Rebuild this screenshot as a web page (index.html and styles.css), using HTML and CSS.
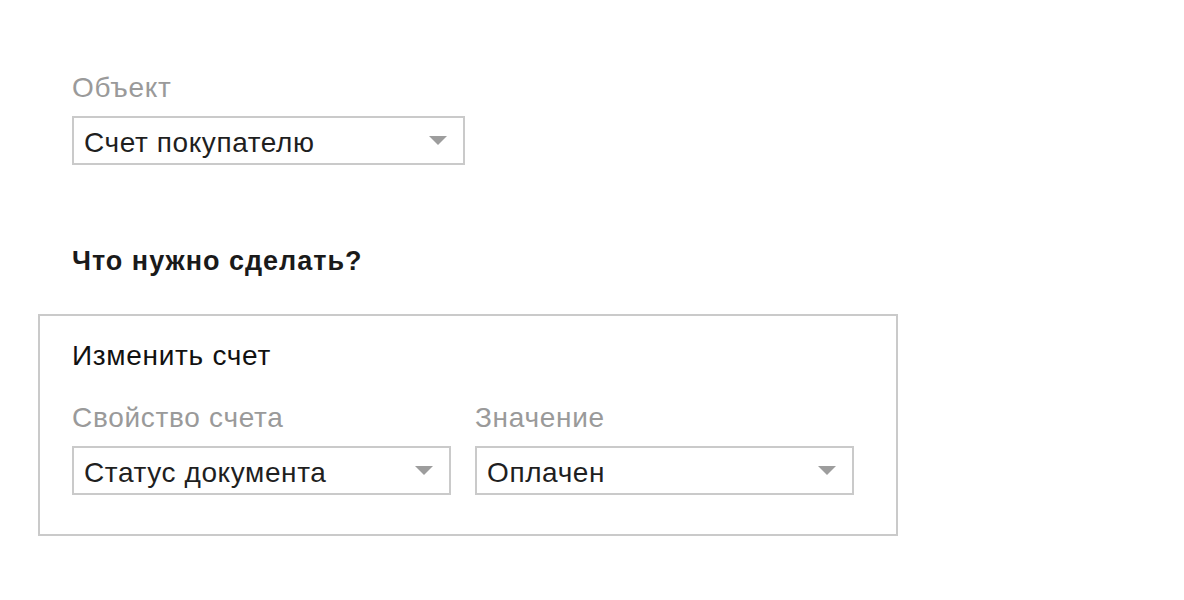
FILE: index.html
```html
<!DOCTYPE html>
<html lang="ru">
<head>
<meta charset="utf-8">
<link rel="stylesheet" href="styles.css">
</head>
<body>
<div class="page">
  <div class="top-field">
    <div class="label">Объект</div>
    <div class="select select-wide">
      <span class="select-text">Счет покупателю</span>
      <span class="arrow"></span>
    </div>
  </div>
  <h2 class="heading">Что нужно сделать?</h2>
  <div class="action-box">
    <div class="action-title">Изменить счет</div>
    <div class="row">
      <div class="col">
        <div class="label">Свойство счета</div>
        <div class="select">
          <span class="select-text">Статус документа</span>
          <span class="arrow"></span>
        </div>
      </div>
      <div class="col">
        <div class="label">Значение</div>
        <div class="select">
          <span class="select-text">Оплачен</span>
          <span class="arrow"></span>
        </div>
      </div>
    </div>
  </div>
</div>
</body>
</html>
```

FILE: styles.css
```css
* { box-sizing: border-box; }
html, body { margin: 0; padding: 0; background: #fff; }
body {
  font-family: "Liberation Sans", Arial, "Helvetica Neue", sans-serif;
  color: #1a1a1a;
}
.page {
  padding: 72px 0 0 38px;
}
.top-field {
  padding-left: 34px;
}
.label {
  font-size: 28px;
  line-height: 32px;
  letter-spacing: 0.7px;
  color: #9a9a9a;
  height: 32px;
  white-space: nowrap;
}
.select {
  margin-top: 12px;
  width: 379px;
  height: 49px;
  border: 2px solid #cacaca;
  display: flex;
  align-items: center;
  justify-content: space-between;
  padding: 4px 16px 0 10px;
  background: #fff;
}
.select-wide { width: 393px; }
.select-text {
  font-size: 28px;
  line-height: 30px;
  letter-spacing: 0.6px;
  color: #1f1f1f;
  white-space: nowrap;
}
.arrow {
  width: 0;
  height: 0;
  border-left: 9px solid transparent;
  border-right: 9px solid transparent;
  border-top: 9px solid #9d9d9d;
  margin-top: -4px;
}
.heading {
  margin: 0;
  padding: 80px 0 0 34px;
  font-size: 27px;
  line-height: 32px;
  letter-spacing: 1px;
  font-weight: bold;
  color: #1a1a1a;
}
.action-box {
  margin-top: 37px;
  width: 860px;
  border: 2px solid #cacaca;
  padding: 24px 0 39px 32px;
}
.action-title {
  font-size: 28px;
  line-height: 32px;
  letter-spacing: 0.7px;
  color: #111;
}
.row {
  margin-top: 30px;
  display: flex;
  gap: 24px;
}
.col { display: flex; flex-direction: column; }
```
